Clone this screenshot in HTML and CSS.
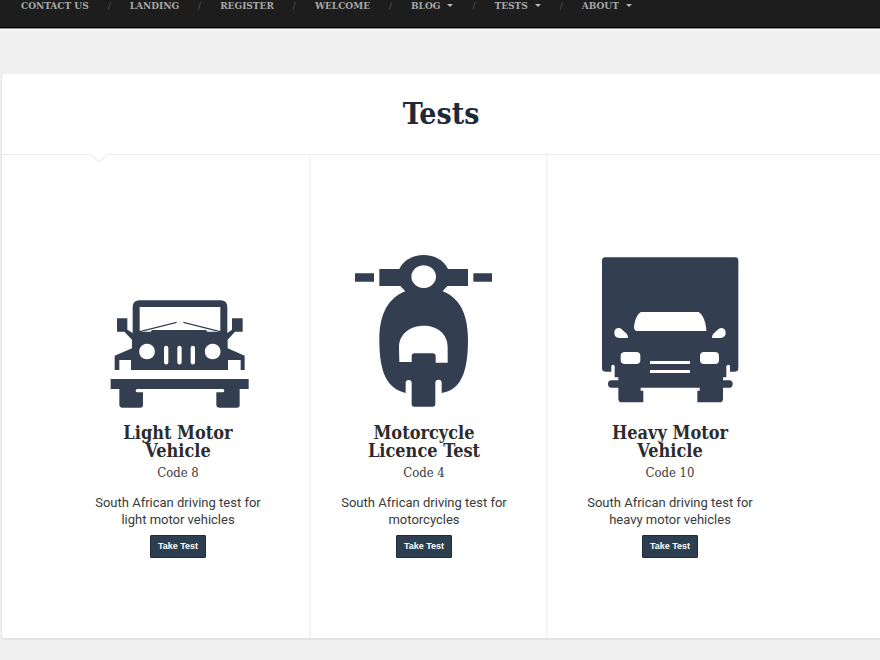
FILE: index.html
```
<!DOCTYPE html>
<html lang="en">
<head>
<meta charset="utf-8">
<meta name="viewport" content="width=device-width, initial-scale=1">
<title>Tests</title>
<link rel="stylesheet" href="styles.css">
</head>
<body>
<nav class="site-nav">
  <ul class="menu">
    <li><a href="#">CONTACT US</a></li>
    <li><a href="#">LANDING</a></li>
    <li><a href="#">REGISTER</a></li>
    <li><a href="#">WELCOME</a></li>
    <li><a href="#" class="has-sub">BLOG</a></li>
    <li><a href="#" class="has-sub">TESTS</a></li>
    <li><a href="#" class="has-sub">ABOUT</a></li>
  </ul>
</nav>
<main class="panel">
  <header class="panel-header">
    <h1>Tests</h1>
    <svg class="notch" width="18" height="9" viewBox="0 0 18 9" aria-hidden="true"><path class="notch-fill" d="M1 0h16L9 8z"/><path class="notch-line" d="M1 1l8 7 8-7"/></svg>
  </header>
  <div class="tests">
    <section class="test test-light">
      <div class="card">
        <svg class="icon" viewBox="-6 -135 540 510" aria-hidden="true">
          <path fill-rule="evenodd" d="M128 129V52Q128 31 149 31H392Q412 31 412 52V129L426 119V85H458V125H435L413 149V175L464 197V240H452V210H414V240H123V210H88V240H74V197L126 175V149L103 125H81V85H112V119ZM149 51V122L160 125H182L186 120H348L352 125H380L391 122V51ZM171 161a23.500 23.500 0 1 0 .1 0ZM368 161a23.500 23.500 0 1 0 .1 0ZM222 174v43a6.500 6.500 0 0 0 13 0v-43a6.500 6.500 0 0 0-13 0ZM262 174v43a6.500 6.500 0 0 0 13 0v-43a6.500 6.500 0 0 0-13 0ZM302 174v43a6.500 6.500 0 0 0 13 0v-43a6.500 6.500 0 0 0-13 0Z"/>
          <path d="M149 123L260 95V99L162 124ZM391 123L280 95V99L378 124Z"/>
          <path d="M62 267H476V297H449V345Q449 353 441 353H389Q379 353 379 344V307H398Q403 307 403 302T398 297H142Q137 297 137 302T142 307H159V344Q159 353 150 353H98Q88 353 88 344V297H62Z"/>
        </svg>
        <h2>Light Motor Vehicle</h2>
        <p class="code">Code 8</p>
        <p class="text">South African driving test for light motor vehicles</p>
        <button type="button">Take Test</button>
      </div>
    </section>
    <section class="test test-motorcycle">
      <div class="card">
        <svg class="icon" viewBox="-33 0 480 510" preserveAspectRatio="xMinYMin" aria-hidden="true">
          <path d="M30 85H87V110H30ZM385 85H441V110H385Z"/>
          <path fill-rule="evenodd" d="M103 72H163C176 45 204 30 236 30S296 45 309 72H369V123H307L293 139C342 158 369 204 369 285C369 386 345 436 290 444V414A9 9 0 0 0 271 414V478Q271 485 264 485H208Q200 485 200 478V414A9 9 0 0 0 182 414V444C128 431 103 386 103 285C103 204 132 158 181 139L166 123H103ZM236 61a37 34 0 1 0 .1 0ZM163 351H200V333Q200 325 209 325H263Q272 325 272 333V353H308V306C308 266 276 242 236 242S162 267 162 306Z"/>
        </svg>
        <h2>Motorcycle Licence Test</h2>
        <p class="code">Code 4</p>
        <p class="text">South African driving test for motorcycles</p>
        <button type="button">Take Test</button>
      </div>
    </section>
    <section class="test test-heavy">
      <div class="card">
        <svg class="icon" viewBox="-30 0 540 510" aria-hidden="true">
          <path fill-rule="evenodd" d="M46 37H435Q445 37 445 47V370Q445 380 435 380H420V364Q420 359 415 359T409 364V397H399V406H418Q428 406 428 417T418 428H399V461Q399 472 388 472H322V437H329V428H152V437H160V472H96Q85 472 85 461V428H64Q54 428 54 417T64 406H85V397H74V364Q74 359 69 359T64 364V380H46Q36 380 36 370V47Q36 37 46 37ZM153 201H326C339 208 349 235 349 258H142Q132 258 132 247C134 227 141 207 153 201ZM87 249Q91 249 95 253L110 266Q114 270 114 279H90Q73 279 73 264T87 249ZM395 249Q407 250 407 264T391 279H366Q366 270 370 266L385 253Q389 249 395 249ZM105 321H139Q151 321 151 333V345Q151 357 139 357H105Q92 357 92 345V333Q92 321 105 321ZM342 321H375Q387 321 387 333V345Q387 357 375 357H342Q330 357 330 345V333Q330 321 342 321ZM180 348H300V357H180ZM180 375H300V384H180Z"/>
        </svg>
        <h2>Heavy Motor Vehicle</h2>
        <p class="code">Code 10</p>
        <p class="text">South African driving test for heavy motor vehicles</p>
        <button type="button">Take Test</button>
      </div>
    </section>
  </div>
</main>
</body>
</html>
```
FILE: styles.css
```
* {
  box-sizing: border-box;
}

body {
  margin: 0;
  background: #f0f0f0;
  color: #3a3a3a;
  font-family: Roboto, "Liberation Sans", sans-serif;
}

h1, h2, p, ul {
  margin: 0;
  padding: 0;
}

.site-nav {
  background: #1d1d1d;
  border-bottom: 1px solid #000;
  box-shadow: 0 1px #909090, 0 2px #fff;
  padding: 0 21px 16px;
}

.menu {
  display: flex;
  list-style: none;
  font: bold 10px/11px "Roboto Slab", "DejaVu Serif Condensed", "DejaVu Serif", serif;
}

.menu li {
  display: flex;
}

.menu li + li::before {
  content: "/";
  width: 41px;
  text-align: center;
  font-weight: normal;
  color: #5a5a5a;
}

.menu a {
  color: #a8a8a8;
  text-decoration: none;
}

.has-sub::after {
  content: "";
  display: inline-block;
  margin-left: 7px;
  vertical-align: 2px;
  border: 3px solid transparent;
  border-top-color: #b5b5b5;
  border-bottom: 0;
}

.panel {
  margin: 46px 0 20px 2px;
  background: #fff;
  border-radius: 3px 0 0 3px;
  box-shadow: 0 2px #e4e4e4, -1px 0 #e6e6e6;
}

.panel-header {
  position: relative;
  padding: 20px 0;
  border-bottom: 1px solid #ececec;
  text-align: center;
}

h1 {
  color: #1e2a38;
  font: bold 30px/40px "Roboto Slab", "DejaVu Serif Condensed", "DejaVu Serif", serif;
}

.notch {
  position: absolute;
  top: 100%;
  left: 88px;
}

.notch-fill {
  fill: #fff;
}

.notch-line {
  fill: none;
  stroke: #e6e6e6;
}

.tests {
  display: grid;
  grid-template-columns: 309fr 237fr 332fr;
}

.test {
  padding: 90px 0 80px;
  border-right: 2px solid #f5f5f5;
}

.test:last-child {
  border-right: 0;
}

.test-light {
  padding-left: 86px;
}

.test-motorcycle {
  padding-left: 23px;
}

.test-heavy {
  padding-left: 32px;
}

.card {
  width: 180px;
  text-align: center;
}

.icon {
  display: block;
  width: 180px;
  height: 170px;
  fill: #333f50;
}

h2 {
  margin: 9px 0 4px;
  padding: 0 20px;
  color: #2c2c2c;
  font: bold 18px/18px "Roboto Slab", "DejaVu Serif Condensed", "DejaVu Serif", serif;
}

.code {
  font: 13px/17px "Roboto Slab", "DejaVu Serif Condensed", "DejaVu Serif", serif;
}

.text {
  margin: 13px 0 6px;
  font-size: 13px;
  line-height: 17px;
}

button {
  height: 23px;
  padding: 0 7px;
  border: 1px solid #1c2c3e;
  border-radius: 1px;
  background: #2c3e50;
  color: #fff;
  font: bold 9px/12px "Liberation Sans", Arial, sans-serif;
}
```
